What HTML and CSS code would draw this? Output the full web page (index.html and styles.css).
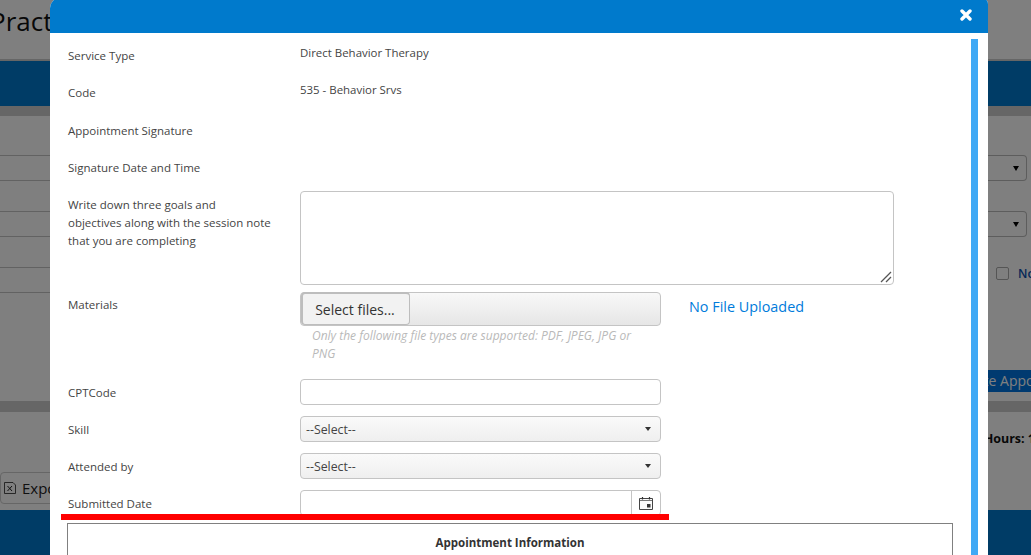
FILE: index.html
```html
<!DOCTYPE html>
<html lang="en">
<head>
<meta charset="utf-8">
<title>Appointment</title>
<link rel="stylesheet" href="styles.css">
</head>
<body>
<div class="backdrop-page">
  <div class="bg-title">Practice</div>
  <div class="bg-band"></div>
  <div class="bg-strip"></div>
  <div class="bg-filter">
    <div class="bg-col">
      <div class="bg-input"></div>
      <div class="bg-input"></div>
      <div class="bg-input"></div>
    </div>
    <div class="bg-col-right">
      <div class="bg-select"><span class="bg-caret"></span></div>
      <div class="bg-select"><span class="bg-caret"></span></div>
      <div class="bg-check"><span class="bg-box"></span><span class="bg-no">No</span></div>
      <div class="bg-btn"><span class="bg-btn-text">Complete Appointment</span></div>
    </div>
  </div>
  <div class="bg-strip2"></div>
  <div class="bg-summary">
    <div class="bg-export">
      <svg class="bg-xls" viewBox="0 0 12 12" width="12" height="12"><path d="M.5.5h8.500l2.500 2.500v8.500H.5z" fill="none" stroke="#222" stroke-width=".8"/><path d="M3.500 4l4.500 5M8 4L3.500 9" stroke="#222" stroke-width="1"/></svg>
      <span>Export</span>
    </div>
    <div class="bg-hours"><span class="bg-hours-text">Total Hours: 1</span></div>
  </div>
  <div class="bg-footer"></div>
</div>
<div class="overlay"></div>
<div class="modal">
  <div class="modal-head">
    <svg class="close" width="12" height="12" viewBox="0 0 12 12"><path d="M2 2l8 8M10 2l-8 8" stroke="#fff" stroke-width="3.400" stroke-linecap="round"/></svg>
  </div>
  <div class="modal-body">
    <div class="scrollbar"></div>
    <div class="form">
      <div class="row row-text"><div class="lab">Service Type</div><div class="val">Direct Behavior Therapy</div></div>
      <div class="row row-text"><div class="lab">Code</div><div class="val">535 - Behavior Srvs</div></div>
      <div class="row row-sign"><div class="lab">Appointment Signature</div></div>
      <div class="row row-sign-date"><div class="lab">Signature Date and Time</div></div>
      <div class="row row-area">
        <div class="lab lab-multi">Write down three goals and<br>objectives along with the session note<br>that you are completing</div>
        <div class="area">
          <svg class="grip" width="12" height="12" viewBox="0 0 12 12"><path d="M1 11L11 1M6 11l5-5" stroke="#555" stroke-width="1.300"/></svg>
        </div>
      </div>
      <div class="row row-files">
        <div class="lab">Materials</div>
        <div class="upload-col">
          <div class="upload"><span class="upload-btn">Select files...</span></div>
          <div class="hint">Only the following file types are supported: PDF, JPEG, JPG or PNG</div>
        </div>
        <a class="nofile">No File Uploaded</a>
      </div>
      <div class="row row-ctl"><div class="lab">CPTCode</div><div class="ctl"></div></div>
      <div class="row row-ctl"><div class="lab">Skill</div><div class="ctl ctl-select"><span>--Select--</span><i class="caret"></i></div></div>
      <div class="row row-ctl"><div class="lab">Attended by</div><div class="ctl ctl-select"><span>--Select--</span><i class="caret"></i></div></div>
      <div class="row row-ctl"><div class="lab">Submitted Date</div>
        <div class="ctl ctl-date"><span class="date-btn">
          <svg width="14" height="14" viewBox="0 0 14 14"><path d="M.5 2.500h13v11H.5z" fill="#fafafa" stroke="#444"/><path d="M1 4.500h12" stroke="#777"/><path d="M3.500 1v2.500M10.500 1v2.500" stroke="#333" stroke-width="1.200"/><path d="M8 8h3.500v3.500H8z" fill="#333"/></svg>
        </span></div>
      </div>
      <div class="info"><div class="info-title">Appointment Information</div></div>
    </div>
  </div>
</div>
<div class="redline"></div>
</body>
</html>
```
FILE: styles.css
```css
* { box-sizing: border-box; }
html, body { margin: 0; height: 555px; overflow: hidden; }
body { position: relative; width: 1031px; font-family: "Open Sans", "Liberation Sans", sans-serif; background: #fff; color: #333; }

.backdrop-page { height: 555px; display: flex; flex-direction: column; background: #fff; overflow: hidden; }
.bg-title { height: 61px; font-size: 26px; line-height: 42px; margin-left: -10px; color: #111; border-bottom: 2px solid #ccc; background: #fff; white-space: nowrap; }
.bg-band { height: 45px; flex: none; background: #0078cc; }
.bg-strip { height: 10px; flex: none; background: #ccc; }
.bg-filter { height: 285px; flex: none; display: flex; justify-content: space-between; background: #fff; }
.bg-col { width: 50px; padding-top: 39px; display: flex; flex-direction: column; gap: 30px; }
.bg-input { height: 26px; border-top: 1px solid #c4c4c4; border-bottom: 1px solid #c4c4c4; }
.bg-col-right { width: 43px; padding-top: 39px; display: flex; flex-direction: column; }
.bg-select { width: 39px; height: 26px; flex: none; border: 1px solid #bbb; border-left: 0; border-radius: 0 4px 4px 0; margin-bottom: 30px; display: flex; justify-content: flex-end; align-items: center; padding-right: 7px; }
.bg-caret { border: 3.500px solid transparent; border-top: 5px solid #000; border-bottom: 0; }
.bg-check { display: flex; align-items: center; gap: 9px; height: 13px; flex: none; margin-left: 8px; width: 35px; overflow: hidden; }
.bg-box { width: 13px; height: 13px; border: 1px solid #aaa; border-radius: 2px; flex: none; }
.bg-no { color: #0a4fb0; font-size: 12px; font-weight: 600; }
.bg-btn { margin: 90px 0 0 -13px; width: 56px; height: 22px; flex: none; background: #0075e0; color: #fff; font-size: 14px; line-height: 22px; display: flex; justify-content: flex-end; overflow: hidden; white-space: nowrap; }
.bg-btn-text { margin-right: -55px; flex: none; }
.bg-strip2 { height: 11px; flex: none; background: #ccc; }
.bg-summary { height: 98px; flex: none; display: flex; justify-content: space-between; align-items: flex-start; background: #fff; }
.bg-export { margin-top: 60px; width: 60px; height: 32px; border: 1px solid #ccc; border-radius: 4px; display: flex; align-items: center; gap: 6px; padding-left: 3px; font-size: 15px; color: #222; white-space: nowrap; overflow: hidden; }
.bg-xls { flex: none; }
.bg-hours { margin-top: 18px; width: 43px; display: flex; justify-content: flex-end; font-size: 12.500px; line-height: 18px; font-weight: 700; white-space: nowrap; color: #111; }
.bg-hours-text { flex: none; margin-right: -4px; }
.bg-footer { flex: 1; background: #0078cc; }

.overlay { position: absolute; inset: 0; background: rgba(0, 0, 0, .5); }

.modal { position: absolute; left: 50px; top: -2px; width: 938px; height: 557px; background: #fff; border-radius: 10px 6px 0 0; overflow: hidden; display: flex; flex-direction: column; }
.modal-head { height: 35px; flex: none; background: #007acc; display: flex; justify-content: flex-end; padding: 11px 16px 0 0; }
.close { display: block; }
.modal-body { flex: 1; position: relative; overflow: hidden; }
.scrollbar { position: absolute; left: 921px; top: 6px; width: 7px; bottom: 0; background: #3fa9f5; }
.form { padding: 0 35px 0 17px; }

.row { display: flex; align-items: flex-start; }
.lab { width: 233px; flex: none; padding-left: 1px; font-size: 11.500px; line-height: 18px; color: #444; }
.val { font-size: 11.450px; line-height: 18px; color: #444; }
.row-text { height: 37px; padding-top: 14px; }
.row-text .val { margin-top: -3px; }
.row-sign { height: 38px; padding-top: 15px; }
.row-sign-date { height: 46px; padding-top: 14px; }
.row-area { height: 101px; }
.lab-multi { padding-top: 5px; }
.area { width: 594px; height: 94px; border: 1px solid #c4c4c4; border-radius: 4px; position: relative; }
.grip { position: absolute; right: 1px; bottom: 1px; }

.row-files { height: 87px; }
.row-files .lab { padding-top: 4px; }
.upload-col { width: 361px; flex: none; }
.upload { height: 34px; border: 1px solid #c4c4c4; border-radius: 4px; background: linear-gradient(#f8f8f8, #e6e6e6); display: flex; }
.upload-btn { width: 109px; height: 33px; margin-top: -1px; padding-right: 2px; border: 2px solid #bdbdbd; border-right-width: 1px; border-bottom-width: 1px; border-radius: 4px; background: #f2f2f2; font-size: 14px; line-height: 31px; text-align: center; color: #333; }
.hint { font-style: italic; color: #b9b9b9; font-size: 12px; line-height: 18px; padding: 1px 20px 0 12px; }
.nofile { margin: 5px 0 0 28px; color: #007bdb; font-size: 14.400px; line-height: 20px; }

.row-ctl { height: 37px; }
.row-ctl .lab { padding-top: 5px; }
.ctl { width: 361px; height: 26px; border: 1px solid #c4c4c4; border-radius: 4px; background: #fff; }
.ctl-select { background: linear-gradient(#fafafa, #efefef); display: flex; justify-content: space-between; align-items: center; padding: 0 9px 0 5px; font-size: 12.300px; color: #444; }
.caret { border: 3px solid transparent; border-top: 4px solid #333; border-bottom: 0; }
.ctl-date { display: flex; justify-content: flex-end; }
.date-btn { width: 29px; border-left: 1px solid #c4c4c4; display: flex; align-items: center; justify-content: center; }
.info { width: 886px; height: 60px; margin-top: -4px; border: 1px solid #808080; }
.info-title { text-align: center; font-size: 11.500px; font-weight: 700; color: #333; line-height: 18px; padding-top: 10px; }

.redline { position: absolute; left: 61px; top: 514px; width: 608px; height: 6px; background: #f00; }
```
